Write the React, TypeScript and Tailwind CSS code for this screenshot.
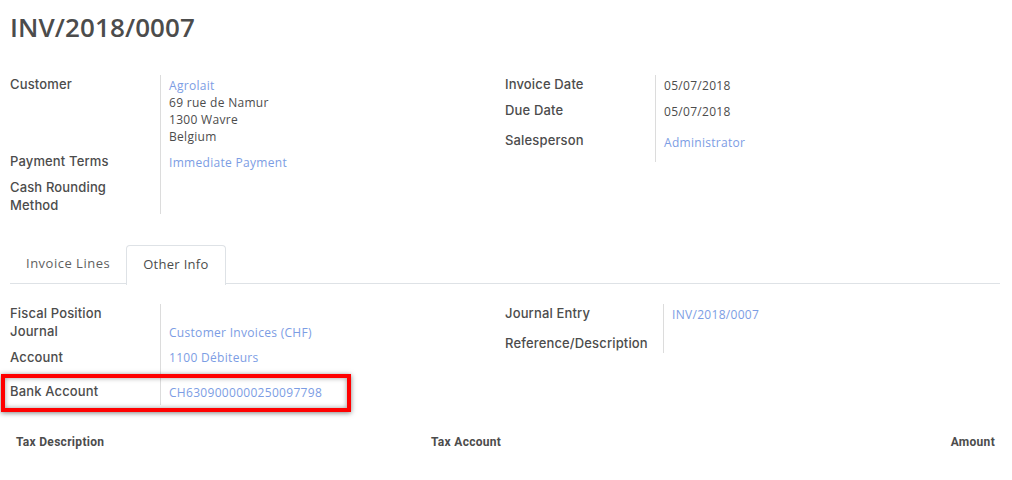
import React from 'react';

const label = 'text-[13px] leading-[18px] font-medium text-[#4c4c4c] tracking-[0.15px]';
const value = 'text-[12px] leading-[17px] text-[#4c4c4c] tracking-[0.3px]';
const link = 'text-[12px] leading-[17px] text-[#7c9de4] tracking-[0.3px]';

type Row = { label: React.ReactNode; value?: React.ReactNode; h: string; vpt?: string };

function Group({ rows, labelW = 'w-[150px]' }: { rows: Row[]; labelW?: string }) {
  return (
    <div className="flex flex-col">
      {rows.map((r, i) => (
        <div key={i} className={`flex ${r.h}`}>
          <div className={`${labelW} shrink-0 ${label}`} style={{ fontFamily: 'Inter, "Open Sans", sans-serif' }}>
            {r.label}
          </div>
          <div className={`flex-1 border-l border-[#dcdcdc] pl-[8px] ${r.vpt ?? 'pt-[1px]'}`}>{r.value}</div>
        </div>
      ))}
    </div>
  );
}

export default function App() {
  return (
    <div className="w-[1012px] h-[480px] bg-white px-[10px] overflow-hidden" style={{ fontFamily: '"Open Sans", "Noto Sans", sans-serif' }}>
      <h1 className="pt-[12px] text-[26px] leading-[30px] font-semibold text-[#4c4c4c] tracking-[0.1px]">INV/2018/0007</h1>

      <div className="grid grid-cols-[495px_1fr] mt-[33px]">
        <Group
          rows={[
            {
              label: 'Customer',
              h: 'h-[77px]',
              vpt: 'pt-[2px]',
              value: (
                <div>
                  <div className={link}>Agrolait</div>
                  <div className={value}>69 rue de Namur</div>
                  <div className={value}>1300 Wavre</div>
                  <div className={value}>Belgium</div>
                </div>
              ),
            },
            { label: 'Payment Terms', h: 'h-[26px]', vpt: 'pt-[2px]', value: <div className={link}>Immediate Payment</div> },
            {
              label: (
                <>
                  Cash Rounding
                  <br />
                  Method
                </>
              ),
              h: 'h-[36px]',
            },
          ]}
        />
        <Group
          rows={[
            { label: 'Invoice Date', h: 'h-[26px]', vpt: 'pt-[2px]', value: <div className={value}>05/07/2018</div> },
            { label: 'Due Date', h: 'h-[30px]', vpt: 'pt-[2px]', value: <div className={value}>05/07/2018</div> },
            { label: 'Salesperson', h: 'h-[31px]', vpt: 'pt-[3px]', value: <div className={link}>Administrator</div> },
          ]}
        />
      </div>

      <div className="mt-[31px] flex items-start h-[39px] border-b border-[#dee2e6] w-[990px] text-[13px] tracking-[0.3px]">
        <div className="px-[16px] h-[38px] flex items-center text-[#5f5f5f] tracking-[0.5px]">Invoice Lines</div>
        <div className="px-[16px] h-[40px] pb-[2px] flex items-center text-[#4c4c4c] bg-white border border-b-0 border-[#dee2e6] rounded-t-[4px]">Other Info</div>
      </div>

      <div className="grid grid-cols-[495px_1fr] mt-[20px]">
        <Group
          rows={[
            { label: 'Fiscal Position', h: 'h-[18px]' },
            { label: 'Journal', h: 'h-[26px]', vpt: 'pt-[2px]', value: <div className={link}>Customer Invoices (CHF)</div> },
            { label: 'Account', h: 'h-[34px]', vpt: 'pt-[1px]', value: <div className={link}>1100 Débiteurs</div> },
            {
              label: (
                <div className="relative">
                  Bank Account
                  <div className="absolute left-[-9px] top-[-8px] w-[350px] h-[38px] border-[4px] border-[#ff0000] shadow-[0_1px_5px_rgba(0,0,0,0.5),inset_0_0_5px_rgba(0,0,0,0.4)] pointer-events-none" />
                </div>
              ),
              h: 'h-[23px]',
              vpt: 'pt-[2px]',
              value: <div className={link}>CH6309000000250097798</div>,
            },
          ]}
        />
        <Group
          labelW="w-[158px]"
          rows={[
            { label: 'Journal Entry', h: 'h-[30px]', vpt: 'pt-[2px]', value: <div className={link}>INV/2018/0007</div> },
            { label: 'Reference/Description', h: 'h-[19px]' },
          ]}
        />
      </div>

      <div className="mt-[28px] w-[990px] flex text-[12px] font-bold text-[#4c4c4c] tracking-[0.3px]" style={{ fontFamily: 'Roboto, "Liberation Sans", sans-serif' }}>
        <div className="w-[415px] px-[6px]">Tax Description</div>
        <div className="flex-1 px-[6px]">Tax Account</div>
        <div className="px-[5px] text-right">Amount</div>
      </div>
    </div>
  );
}
